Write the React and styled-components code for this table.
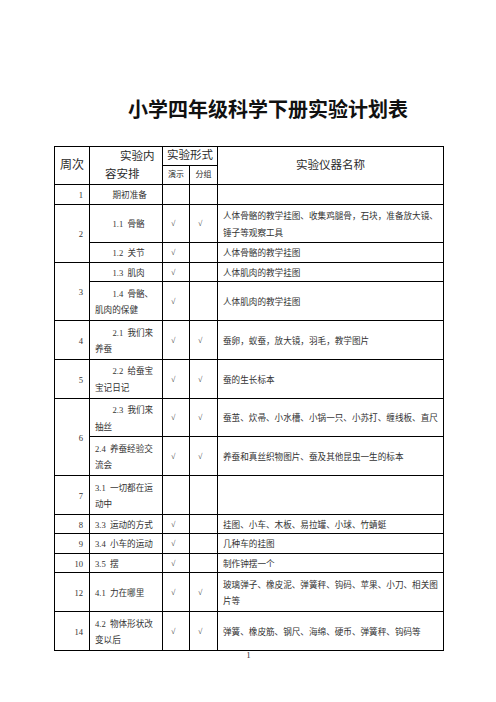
import React from "react";
import styled, { createGlobalStyle } from "styled-components";

const U = 19.4;

const Global = createGlobalStyle`
  html, body { margin: 0; padding: 0; background: #fff; }
  body { font-family: "Liberation Serif", "Noto Sans CJK SC", serif; color: #333; }
`;

const Page = styled.div`
  width: 496px;
  min-height: 702px;
  box-sizing: border-box;
  padding: 99px 0 0 54px;
`;

const Title = styled.h1`
  margin: 0;
  width: 389px;
  box-sizing: border-box;
  padding-left: 39px;
  text-align: center;
  font-family: "Noto Sans CJK SC", sans-serif;
  font-weight: 700;
  font-size: 20px;
  line-height: 20px;
  color: #111;
  white-space: nowrap;
`;

const Table = styled.table`
  margin-top: 26.5px;
  width: 389px;
  border-collapse: collapse;
  table-layout: fixed;
  font-size: 8.6px;
`;

const Row = styled.tr`
  height: ${(p) => p.$units * U}px;
`;

const Cell = styled.td`
  border: 1px solid #000;
  padding: 0;
  vertical-align: middle;
  overflow: hidden;
  white-space: nowrap;
  line-height: 16.4px;
`;

const HeadCell = styled(Cell)`
  font-size: ${(p) => p.$size || 11.5}px;
  text-align: center;
  color: #2a2a2a;
`;

const WeekCell = styled(Cell)`
  text-align: right;
  padding: 2px 6px 0 0;
`;

const ContentCell = styled(Cell)`
  padding: 2px 3px 0 5px;
`;

const CheckCell = styled(Cell)`
  padding: 2px 0 0 8px;
  font-size: 8px;
`;

const DescCell = styled(Cell)`
  padding: 2px 0 0 5px;
`;

const Line = styled.div`
  padding-left: ${(p) => (p.$indent ? 17.5 : 0)}px;
  word-spacing: 2px;
`;

const HeadLine = styled.div`
  text-align: left;
  padding-left: ${(p) => p.$pad}px;
  line-height: 18px;
`;

const PageNum = styled.div`
  width: 389px;
  text-align: center;
  font-size: 8px;
  line-height: 10px;
  color: #222;
`;

const weeks = [
  { w: "1", items: [{ c: ["期初准备"], ind: true, h: 1, a: "", b: "", d: [] }] },
  {
    w: "2",
    items: [
      {
        c: ["1.1 骨骼"], ind: true, h: 2, a: "√", b: "√",
        d: ["人体骨骼的教学挂图、收集鸡腿骨，石块，准备放大镜、", "锤子等观察工具"],
      },
      { c: ["1.2 关节"], ind: true, h: 1, a: "√", b: "", d: ["人体骨骼的教学挂图"] },
    ],
  },
  {
    w: "3",
    items: [
      { c: ["1.3 肌肉"], ind: true, h: 1, a: "√", b: "", d: ["人体肌肉的教学挂图"] },
      { c: ["1.4 骨骼、", "肌肉的保健"], ind: true, h: 2, a: "√", b: "", d: ["人体肌肉的教学挂图"] },
    ],
  },
  { w: "4", items: [{ c: ["2.1 我们来", "养蚕"], ind: true, h: 2, a: "√", b: "√", d: ["蚕卵，蚁蚕，放大镜，羽毛，教学图片"] }] },
  { w: "5", items: [{ c: ["2.2 给蚕宝", "宝记日记"], ind: true, h: 2, a: "√", b: "√", d: ["蚕的生长标本"] }] },
  {
    w: "6",
    items: [
      { c: ["2.3 我们来", "抽丝"], ind: true, h: 2, a: "√", b: "√", d: ["蚕茧、炊帚、小水槽、小锅一只、小苏打、缠线板、直尺"] },
      { c: ["2.4 养蚕经验交", "流会"], ind: false, h: 2, a: "√", b: "√", d: ["养蚕和真丝织物图片、蚕及其他昆虫一生的标本"] },
    ],
  },
  { w: "7", items: [{ c: ["3.1 一切都在运", "动中"], ind: false, h: 2, a: "", b: "", d: [] }] },
  { w: "8", items: [{ c: ["3.3 运动的方式"], ind: false, h: 1, a: "√", b: "", d: ["挂图、小车、木板、易拉罐、小球、竹蜻蜓"] }] },
  { w: "9", items: [{ c: ["3.4 小车的运动"], ind: false, h: 1, a: "√", b: "", d: ["几种车的挂图"] }] },
  { w: "10", items: [{ c: ["3.5 摆"], ind: false, h: 1, a: "√", b: "", d: ["制作钟摆一个"] }] },
  {
    w: "12",
    items: [{ c: ["4.1 力在哪里"], ind: false, h: 2, a: "√", b: "√", d: ["玻璃弹子、橡皮泥、弹簧秤、钩码、苹果、小刀、相关图", "片等"] }],
  },
  { w: "14", items: [{ c: ["4.2 物体形状改", "变以后"], ind: false, h: 2, a: "√", b: "√", d: ["弹簧、橡皮筋、钢尺、海绵、硬币、弹簧秤、钩码等"] }] },
];

export default function App() {
  return (
    <Page>
      <Global />
      <Title>小学四年级科学下册实验计划表</Title>
      <Table>
        <colgroup>
          <col style={{ width: 35 }} />
          <col style={{ width: 73 }} />
          <col style={{ width: 27 }} />
          <col style={{ width: 28 }} />
          <col style={{ width: 226 }} />
        </colgroup>
        <thead>
          <Row $units={1}>
            <HeadCell rowSpan={2} $size={12}>周次</HeadCell>
            <HeadCell rowSpan={2}>
              <HeadLine $pad={30}>实验内</HeadLine>
              <HeadLine $pad={15}>容安排</HeadLine>
            </HeadCell>
            <HeadCell colSpan={2}>实验形式</HeadCell>
            <HeadCell rowSpan={2}>实验仪器名称</HeadCell>
          </Row>
          <Row $units={1}>
            <HeadCell $size={8}>演示</HeadCell>
            <HeadCell $size={8}>分组</HeadCell>
          </Row>
        </thead>
        <tbody>
          {weeks.map((wk) =>
            wk.items.map((it, i) => (
              <Row key={wk.w + "-" + i} $units={it.h}>
                {i === 0 && <WeekCell rowSpan={wk.items.length}>{wk.w}</WeekCell>}
                <ContentCell>
                  {it.c.map((l, j) => (
                    <Line key={j} $indent={j === 0 && it.ind}>{l}</Line>
                  ))}
                </ContentCell>
                <CheckCell>{it.a}</CheckCell>
                <CheckCell>{it.b}</CheckCell>
                <DescCell>
                  {it.d.map((l, j) => (
                    <Line key={j}>{l}</Line>
                  ))}
                </DescCell>
              </Row>
            ))
          )}
        </tbody>
      </Table>
      <PageNum>1</PageNum>
    </Page>
  );
}
